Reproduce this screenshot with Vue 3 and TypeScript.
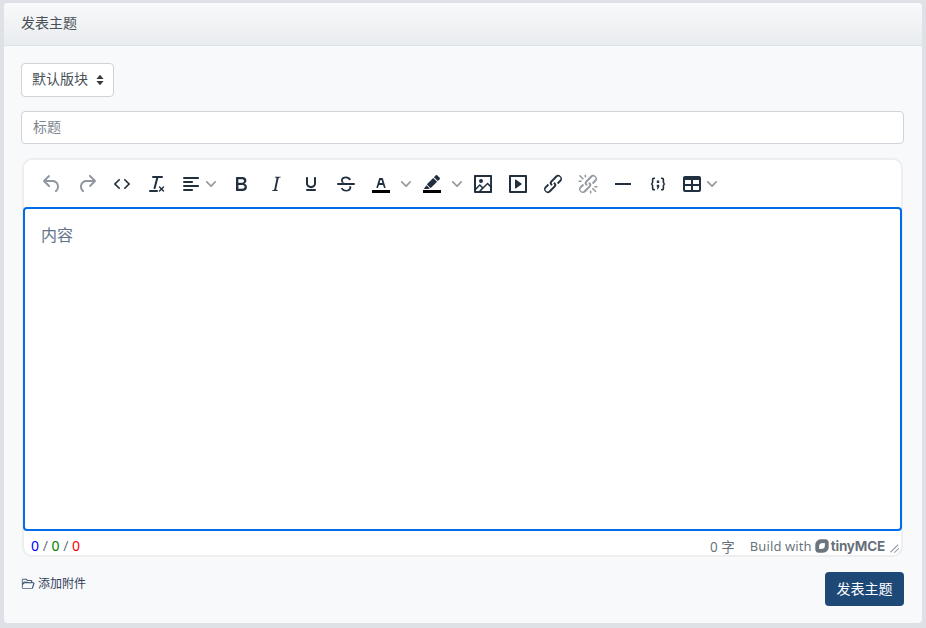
<script setup lang="ts">
interface Tool {
  name: string
  paths: string[]
  split?: 'narrow' | 'wide'
  muted?: boolean
}

const tools: Tool[] = [
  { name: 'undo', muted: true, paths: ['M6.4 8H12c3.7 0 6.2 2 6.8 5.1.6 2.7-.4 5.6-2.3 6.8a1 1 0 0 1-1-1.8c1.1-.6 1.8-2.7 1.4-4.6-.5-2.1-2.1-3.5-4.9-3.5H6.4l3.3 3.3a1 1 0 1 1-1.4 1.4l-5-5a1 1 0 0 1 0-1.4l5-5a1 1 0 0 1 1.4 1.4L6.4 8Z'] },
  { name: 'redo', muted: true, paths: ['M17.6 10H12c-2.8 0-4.4 1.4-4.9 3.5-.4 2 .3 4 1.4 4.6a1 1 0 1 1-1 1.8c-2-1.2-2.9-4.1-2.3-6.8.6-3 3-5.1 6.8-5.1h5.6l-3.3-3.3a1 1 0 1 1 1.4-1.4l5 5a1 1 0 0 1 0 1.4l-5 5a1 1 0 0 1-1.4-1.4l3.3-3.3Z'] },
  { name: 'code', paths: ['M9.8 15.7c.3.3.3.8 0 1-.3.4-.9.4-1.2 0l-4.4-4.1a.8.8 0 0 1 0-1.2l4.4-4.2c.3-.3.9-.3 1.2 0 .3.3.3.8 0 1.1L6 12l3.8 3.7ZM14.2 15.7c-.3.3-.3.8 0 1 .4.4.9.4 1.2 0l4.4-4.1c.3-.3.3-.9 0-1.2l-4.4-4.2a.8.8 0 0 0-1.2 0c-.3.3-.3.8 0 1.1L18 12l-3.8 3.7Z'] },
  { name: 'clear', paths: ['M13.2 6a1 1 0 0 1 0 .2l-2.6 10a1 1 0 0 1-1 .8h-.2a.8.8 0 0 1-.8-1l2.6-10H8a1 1 0 1 1 0-2h9a1 1 0 0 1 0 2h-3.8ZM5 18h7a1 1 0 0 1 0 2H5a1 1 0 0 1 0-2Zm13 1.5L16.5 18 15 19.5a.7.7 0 0 1-1-1l1.5-1.5-1.5-1.5a.7.7 0 0 1 1-1l1.5 1.5 1.5-1.5a.7.7 0 0 1 1 1L17.5 17l1.5 1.5a.7.7 0 0 1-1 1Z'] },
  { name: 'align', split: 'narrow', paths: ['M5 5h14c.6 0 1 .4 1 1s-.4 1-1 1H5a1 1 0 1 1 0-2Zm0 4h8c.6 0 1 .4 1 1s-.4 1-1 1H5a1 1 0 1 1 0-2Zm0 8h8c.6 0 1 .4 1 1s-.4 1-1 1H5a1 1 0 0 1 0-2Zm0-4h14c.6 0 1 .4 1 1s-.4 1-1 1H5a1 1 0 0 1 0-2Z'] },
  { name: 'bold', paths: ['M7.8 19c-.3 0-.5 0-.6-.2l-.2-.5V5.7c0-.2 0-.4.2-.5l.6-.2h5c1.5 0 2.7.3 3.5 1 .7.6 1.1 1.4 1.1 2.5a3 3 0 0 1-.6 1.9c-.4.6-1 1-1.6 1.2.4.1.9.3 1.3.6s.8.7 1 1.2c.3.4.4 1 .4 1.6 0 1.3-.4 2.3-1.3 3-.8.7-2.1 1-3.8 1H7.8Zm5-8.3c.6 0 1.2-.1 1.6-.5.4-.3.6-.7.6-1.3 0-1.1-.8-1.7-2.3-1.7H9.3v3.5h3.4Zm.5 6c.7 0 1.3-.1 1.7-.4.4-.4.6-.9.6-1.5s-.2-1-.7-1.4c-.4-.3-1-.4-2-.4H9.4v3.8h4Z'] },
  { name: 'italic', paths: ['M16.7 4.7l-.1.9h-.3c-.6 0-1 0-1.4.3-.3.3-.4.6-.5 1.1l-2.1 9.8v.6c0 .5.4.8 1.4.8h.2l-.2.8H8l.2-.8h.2c1.1 0 1.8-.5 2-1.5l2-9.8.1-.5c0-.6-.4-.8-1.4-.8h-.3l.2-.9h5.8Z'] },
  { name: 'underline', paths: ['M16 5c.6 0 1 .4 1 1v5.5a4 4 0 0 1-.4 1.8l-1 1.4a5.3 5.3 0 0 1-5.5 1 5 5 0 0 1-1.6-1c-.5-.4-.8-.9-1.1-1.4a4 4 0 0 1-.4-1.8V6c0-.6.4-1 1-1s1 .4 1 1v5.5c0 .3 0 .6.2 1l.6.7a3.3 3.3 0 0 0 2.2.8 3.4 3.4 0 0 0 2.2-.8c.3-.2.4-.5.6-.8l.2-.9V6c0-.6.4-1 1-1ZM8 17h8c.6 0 1 .4 1 1s-.4 1-1 1H8a1 1 0 0 1 0-2Z'] },
  { name: 'strike', paths: ['M4 11h16a1 1 0 0 1 0 2H4a1 1 0 0 1 0-2Z', 'M17 7.700c-.8-2-2.700-3.200-5.100-3.200-2.900 0-4.900 1.700-4.900 3.900 0 .9.3 1.700 1 2.300h3c-1.400-.4-2.200-1.100-2.200-2.300 0-1.200 1.200-2.200 3-2.200 1.500 0 2.700.8 3.300 2.100l1.900-.6ZM6.800 16.300c.9 2 2.900 3.300 5.300 3.300 3.100 0 5.200-1.700 5.200-4.100 0-.4-.1-.8-.2-1.200h-2.100c.3.300.4.700.4 1.200 0 1.400-1.400 2.400-3.200 2.400-1.700 0-3-.8-3.600-2.200l-1.800.6Z'] },
  { name: 'forecolor', split: 'wide', paths: ['M8.7 16h-.8a.5.5 0 0 1-.5-.6l2.7-9c.1-.3.3-.4.5-.4h2.8c.2 0 .4.1.5.4l2.7 9a.5.5 0 0 1-.5.6h-.8a.5.5 0 0 1-.4-.4l-.7-2.2c0-.2-.3-.4-.5-.4h-3.4c-.2 0-.4.2-.5.4l-.7 2.2c0 .2-.2.4-.4.4Zm2.6-7.6-.6 2a.5.5 0 0 0 .5.6h1.600a.5.5 0 0 0 .5-.6l-.6-2c0-.3-.3-.4-.5-.4h-.4c-.2 0-.4.1-.5.4Z', 'bar'] },
  { name: 'hilite', split: 'wide', paths: ['M15.8 3.300a1 1 0 0 1 1.400 0l2.500 2.500a1 1 0 0 1 0 1.400l-1.900 1.900-3.900-3.900 1.900-1.900ZM13.200 5.900l3.900 3.900-5.800 5.800a1 1 0 0 1-1.400 0L7.400 13.100a1 1 0 0 1 0-1.400l5.800-5.800ZM6.600 13.300l3.100 3.100-1.100.6H4.500l-.5-.6 2.600-3.100Z', 'bar'] },
  { name: 'image', paths: ['M5 15.7l3.3-3.2c.3-.3.7-.3 1 0L12 15l4.1-4c.3-.4.8-.4 1 0l2 1.9V5H5v10.7ZM5 18V19h3l2.8-2.9-2-2L5 17.9Zm14-3l-2.5-2.4-6.4 6.5H19v-4ZM4 3h16c.6 0 1 .4 1 1v16c0 .6-.4 1-1 1H4a1 1 0 0 1-1-1V4c0-.6.4-1 1-1Zm6 8a2 2 0 1 0 0-4 2 2 0 0 0 0 4Z'] },
  { name: 'media', paths: ['M4 3h16c.6 0 1 .4 1 1v16c0 .6-.4 1-1 1H4a1 1 0 0 1-1-1V4c0-.6.4-1 1-1Zm1 2v14h14V5H5Zm4.8 2.6l5.6 4a.5.5 0 0 1 0 .8l-5.6 4A.5.5 0 0 1 9 16V8a.5.5 0 0 1 .8-.4Z'] },
  { name: 'link', paths: ['M6.2 12.3a1 1 0 0 1 1.4 1.4l-2 2a2 2 0 1 0 2.6 2.8l4.8-4.8a1 1 0 0 0 0-1.4 1 1 0 1 1 1.4-1.3 2.9 2.9 0 0 1 0 4L9.6 20a3.9 3.9 0 0 1-5.5-5.5l2-2Zm11.6-.6a1 1 0 0 1-1.4-1.4l2-2a2 2 0 1 0-2.6-2.8L11 10.3a1 1 0 0 0 0 1.4A1 1 0 1 1 9.6 13a2.9 2.9 0 0 1 0-4L14.4 4a3.9 3.9 0 0 1 5.5 5.5l-2 2Z'] },
  { name: 'unlink', muted: true, paths: ['M6.2 12.3a1 1 0 0 1 1.4 1.4l-2.1 2a2 2 0 1 0 2.7 2.8l4.8-4.8a1 1 0 0 0 0-1.4 1 1 0 1 1 1.4-1.3 2.9 2.9 0 0 1 0 4l-4.8 4.9a3.9 3.9 0 0 1-5.5-5.5l2-2Zm11.6-.6a1 1 0 0 1-1.4-1.4l2-2a2 2 0 1 0-2.6-2.8L11 10.3a1 1 0 0 0 0 1.4A1 1 0 1 1 9.6 13a2.9 2.9 0 0 1 0-4L14.4 4a3.9 3.9 0 0 1 5.5 5.5l-2 2ZM7.6 6.3a.8.8 0 0 1-1 1.1L3.3 4.2a.7.7 0 1 1 1-1l3.2 3.1ZM5.1 8.6a.8.8 0 0 1 0 1.5H3a.8.8 0 0 1 0-1.5H5Zm5-3.5a.8.8 0 0 1-1.5 0V3a.8.8 0 0 1 1.5 0v2Zm6 11.8a.8.8 0 0 1 1-1l3.2 3.2a.8.8 0 0 1-1 1L16 17Zm-2.2 2a.8.8 0 0 1 1.5 0V21a.8.8 0 0 1-1.5 0V19Zm5-3.5a.7.7 0 0 1 0-1.5H21a.8.8 0 0 1 0 1.5H19Z'] },
  { name: 'hr', paths: ['M4 11h16v2H4z'] },
  { name: 'sample', paths: ['M9 5.500H8C6.500 5.500 5.800 6.300 5.800 7.800V10c0 .9-.4 1.500-1.300 2 .9.5 1.300 1.100 1.300 2v2.200c0 1.500.7 2.300 2.200 2.300h1v-1.500H8.300c-.6 0-.9-.3-.9-1V13.800c0-.8-.4-1.400-1-1.800.6-.4 1-1 1-1.800V8c0-.7.3-1 .9-1H9V5.500ZM15 5.500h1c1.500 0 2.200.8 2.200 2.300V10c0 .9.4 1.500 1.300 2-.9.5-1.300 1.100-1.300 2v2.200c0 1.500-.7 2.300-2.200 2.300h-1v-1.500h.7c.6 0 .9-.3.9-1V13.800c0-.8.4-1.400 1-1.800-.6-.4-1-1-1-1.800V8c0-.7-.3-1-.9-1H15V5.500ZM10.800 8.500h2.400v2.400h-2.400zM10.800 12.700h2.400v2.300l-1.300 2.200h-1.100l.8-2h-.8z'] },
  { name: 'table', split: 'narrow', paths: ['M19 4a2 2 0 0 1 2 2v12a2 2 0 0 1-2 2H5a2 2 0 0 1-2-2V6c0-1.100.9-2 2-2h14ZM5 14v4h6v-4H5Zm14 0h-6v4h6v-4Zm0-6h-6v4h6V8ZM5 12h6V8H5v4Z'] }
]
</script>

<template>
  <div class="page">
    <section class="card">
      <header class="card-head">发表主题</header>
      <div class="card-body">
        <div class="select">
          <span>默认版块</span>
          <svg class="updown" viewBox="0 0 8 12" aria-hidden="true">
            <path d="M4 .8 7.600 5H.4L4 .8ZM4 11.200.4 7h7.200L4 11.200Z" />
          </svg>
        </div>
        <input class="title-input" type="text" placeholder="标题" />

        <div class="editor">
          <div class="toolbar">
            <template v-for="tool in tools" :key="tool.name">
              <div class="tool" :class="[{ muted: tool.muted }, tool.split]">
                <span class="tool-icon">
                  <svg viewBox="0 0 24 24" width="24" height="24" aria-hidden="true">
                    <template v-for="(d, i) in tool.paths" :key="i">
                      <rect v-if="d === 'bar'" class="colour-bar" x="3" y="18" width="18" height="3" />
                      <path v-else :d="d" fill-rule="evenodd" />
                    </template>
                  </svg>
                </span>
                <span v-if="tool.split" class="tool-chevron">
                  <svg viewBox="0 0 10 10" width="10" height="10" aria-hidden="true">
                    <path d="M8.700 2.200c.3-.3.8-.3 1 0 .4.4.4.9 0 1.200L5.700 7.800c-.3.3-.9.3-1.200 0L.2 3.400a.8.8 0 0 1 0-1.200c.3-.3.800-.3 1.100 0L5 6l3.700-3.800Z" />
                  </svg>
                </span>
              </div>
            </template>
          </div>

          <div class="edit-area">
            <span class="placeholder">内容</span>
          </div>

          <div class="statusbar">
            <span class="counts">
              <span class="c-blue">0</span> / <span class="c-green">0</span> / <span class="c-red">0</span>
            </span>
            <span class="status-right">
              <span class="words">0 字</span>
              <span class="build">Build with</span>
              <svg class="tiny-logo" viewBox="0 0 14 14" aria-hidden="true">
                <path fill-rule="evenodd" d="M6 .3H10.500C12.300.3 13.700 1.700 13.700 3.500V8C13.700 11.200 11.200 13.700 8 13.700H3.500C1.700 13.700.3 12.300.3 10.500V6C.3 2.800 2.800.3 6 .3ZM6.300 4.300 9.200 4C9.700 4 10 4.300 10 4.800L9.700 7.700C9.600 8.700 8.700 9.600 7.700 9.700L4.800 10C4.300 10 4 9.700 4 9.200L4.300 6.300C4.400 5.300 5.300 4.400 6.300 4.300Z" />
              </svg>
              <span class="tiny-word">tinyMCE</span>
              <svg class="grip" viewBox="0 0 10 10" aria-hidden="true">
                <path d="M8.800 1.200 1.200 8.800l.7.700 7.600-7.600-.7-.7Zm.7 3.700L5 9.400l.7.600 4.500-4.500-.7-.6Z" />
              </svg>
            </span>
          </div>
        </div>

        <div class="actions">
          <a class="attach">
            <svg viewBox="0 0 16 16" aria-hidden="true">
              <path d="M1 3.500C1 2.700 1.700 2 2.500 2h3.100c.4 0 .8.200 1.100.4l1 1c.1.100.3.100.4.100h3.400c.8 0 1.500.7 1.500 1.500v1h1.200c.9 0 1.500.9 1.200 1.800l-1.600 4.700c-.2.600-.8 1-1.400 1H2.500C1.700 13.500 1 12.800 1 12V3.500Zm1 5.600V12c0 .3.200.5.500.5h9.400c.2 0 .4-.1.500-.3L14 7.500c.1-.3-.1-.5-.3-.5H4.300c-.2 0-.4.100-.5.300L2 9.100Zm9.500-3.100V5c0-.3-.2-.5-.5-.5H7.600c-.4 0-.8-.2-1.100-.4l-1-1c-.1-.1-.3-.1-.4-.1H2.500c-.3 0-.5.200-.5.500v3.700l.9-1.700C3.200 5.400 3.700 5 4.300 5l7.200 1Z" />
            </svg>
            添加附件
          </a>
          <button class="submit" type="button">发表主题</button>
        </div>
      </div>
    </section>
  </div>
</template>

<style>
html,
body {
  margin: 0;
  background: #dee2e6;
}
</style>

<style scoped>
.page {
  box-sizing: border-box;
  height: 628px;
  padding: 3px 4px 5px;
  font-family: "Noto Sans", "Noto Sans CJK SC", sans-serif;
  color: #495057;
}
.card {
  height: 100%;
  display: flex;
  flex-direction: column;
  background: #f8f9fa;
  border-radius: 4px;
  overflow: hidden;
}
.card-head {
  flex: none;
  height: 43px;
  box-sizing: border-box;
  display: flex;
  align-items: center;
  padding: 0 17px 5px;
  font-size: 14px;
  background: linear-gradient(to bottom, #f8f9fa, #e9ecef);
  border-bottom: 1px solid #dee2e6;
}
.card-body {
  flex: 1;
  display: flex;
  flex-direction: column;
  padding: 17px 18px 17px 17px;
}
.select {
  box-sizing: border-box;
  flex: none;
  align-self: flex-start;
  width: 93px;
  height: 34px;
  display: flex;
  align-items: center;
  gap: 8px;
  padding-left: 10px;
  background: #fff;
  border: 1px solid #ced4da;
  border-radius: 4px;
  font-size: 14px;
  color: #495057;
}
.select span {
  margin-bottom: 4px;
}
.updown {
  width: 8px;
  height: 12px;
  fill: #343a40;
}
.title-input {
  box-sizing: border-box;
  flex: none;
  width: 100%;
  height: 33px;
  margin-top: 14px;
  padding: 0 11px 2px;
  border: 1px solid #ced4da;
  border-radius: 4px;
  background: #fff;
  font: inherit;
  font-size: 14px;
  outline: none;
}
.title-input::placeholder {
  color: #7d868f;
}
.editor {
  box-sizing: border-box;
  margin: 14px 1px 0;
  height: 399px;
  flex: none;
  display: flex;
  flex-direction: column;
  background: #fff;
  border: 2px solid #eeeeee;
  border-radius: 10px;
}
.toolbar {
  height: 47px;
  flex: none;
  display: flex;
  align-items: center;
  gap: 1px;
  padding: 1px 0 0 11px;
  box-sizing: border-box;
}
.tool {
  height: 34px;
  display: flex;
  fill: #222f3e;
}
.tool:nth-child(4) {
  margin-right: -1px;
}
.tool:last-child {
  margin-left: -1px;
}
.tool.muted {
  fill: rgba(34, 47, 62, 0.5);
}
.tool-icon {
  width: 34px;
  display: flex;
  align-items: center;
  justify-content: center;
}
.tool-chevron {
  display: flex;
  align-items: center;
  justify-content: center;
  fill: rgba(34, 47, 62, 0.5);
}
.tool.narrow .tool-chevron {
  width: 17px;
  margin-left: -2px;
  justify-content: flex-start;
}
.tool.wide .tool-chevron {
  width: 16px;
}
.colour-bar {
  fill: #000;
}
.edit-area {
  flex: 1;
  box-sizing: border-box;
  margin: 0 -1px;
  padding: 14px 16px;
  background: #fff;
  border: 2px solid #006ce7;
  border-radius: 4px;
}
.placeholder {
  font-size: 16px;
  line-height: 24px;
  color: #64748b;
}
.statusbar {
  height: 24px;
  flex: none;
  box-sizing: border-box;
  display: flex;
  align-items: center;
  justify-content: space-between;
  padding: 5px 2px 0 7px;
  font-size: 13px;
  color: rgba(34, 47, 62, 0.7);
}
.counts {
  font-size: 14px;
}
.c-blue {
  color: #0000ff;
}
.c-green {
  color: #008000;
}
.c-red {
  color: #ff0000;
}
.status-right {
  display: flex;
  align-items: center;
}
.words {
  margin-right: 15px;
  font-size: 13.5px;
}
.build {
  letter-spacing: 0.1px;
}
.tiny-logo {
  width: 14px;
  height: 14px;
  margin-left: 3px;
  fill: #6c757d;
}
.tiny-word {
  margin-left: 2px;
  font-family: "Inter", sans-serif;
  font-weight: 700;
  font-size: 13.5px;
  letter-spacing: -0.2px;
}
.grip {
  width: 10px;
  height: 10px;
  margin: 4px 0 0 4px;
  fill: #8a9098;
}
.actions {
  display: flex;
  justify-content: space-between;
  align-items: flex-start;
  flex: none;
  margin-top: 15px;
}
.attach {
  display: flex;
  align-items: center;
  gap: 3px;
  margin-top: 3px;
  font-size: 12px;
  line-height: 18px;
  color: #33415c;
}
.attach svg {
  width: 14px;
  height: 14px;
  fill: #495e78;
}
.submit {
  width: 79px;
  height: 34px;
  padding: 0 0 2px;
  border: 0;
  border-radius: 4px;
  background: #1e4976;
  color: #fff;
  font: inherit;
  font-size: 14px;
}
</style>
